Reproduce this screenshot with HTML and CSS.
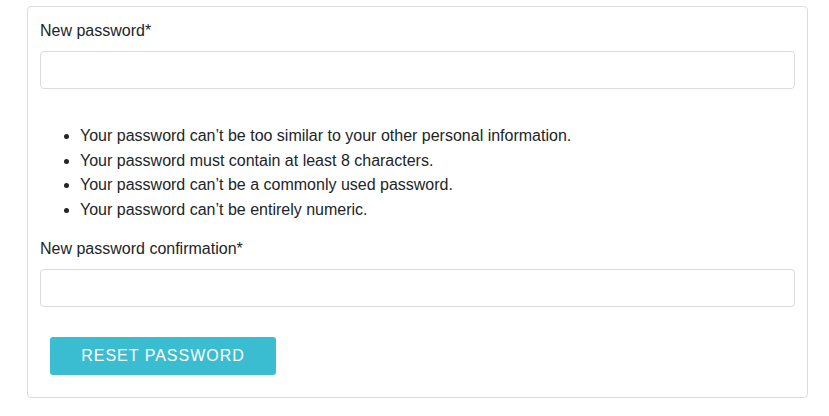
FILE: index.html
```html
<!DOCTYPE html>
<html>
<head>
<meta charset="utf-8">
<link rel="stylesheet" href="styles.css">
</head>
<body>
<div class="page">
  <form class="card">
    <div class="field">
      <label class="label">New password*</label>
      <input class="input" type="password">
    </div>
    <ul class="help">
      <li>Your password can’t be too similar to your other personal information.</li>
      <li>Your password must contain at least 8 characters.</li>
      <li>Your password can’t be a commonly used password.</li>
      <li>Your password can’t be entirely numeric.</li>
    </ul>
    <div class="field">
      <label class="label">New password confirmation*</label>
      <input class="input" type="password">
    </div>
    <div class="actions">
      <button class="btn" type="button">RESET PASSWORD</button>
    </div>
  </form>
</div>
</body>
</html>
```
FILE: styles.css
```css
* { box-sizing: border-box; }
html, body { margin: 0; padding: 0; background: #fff; }
body {
  font-family: "Liberation Sans", Arial, sans-serif;
  font-size: 16px;
  line-height: 24px;
  color: #212529;
}
.page {
  padding: 6px 21px 0 27px;
}
.card {
  display: flex;
  flex-direction: column;
  border: 1px solid #dcdcdc;
  border-radius: 4px;
  padding: 12px 12px 22px 12px;
  width: 781px;
}
.field {
  display: flex;
  flex-direction: column;
}
.label {
  display: block;
  margin-bottom: 8px;
}
.input {
  height: 38px;
  width: 100%;
  border: 1px solid #dcdcdc;
  border-radius: 4px;
  background: #fff;
  padding: 6px 12px;
  font: inherit;
  outline: none;
}
.help {
  margin: 35px 0 15px 0;
  padding-left: 40px;
  line-height: 24.5px;
}
.actions {
  padding: 30px 0 0 10px;
}
.btn {
  background: #3bbdd1;
  color: #fff;
  border: none;
  border-radius: 3px;
  height: 38px;
  width: 226px;
  font-family: "Liberation Sans", Arial, sans-serif;
  font-size: 16px;
  letter-spacing: 1px;
  padding: 0;
  cursor: pointer;
}
```
